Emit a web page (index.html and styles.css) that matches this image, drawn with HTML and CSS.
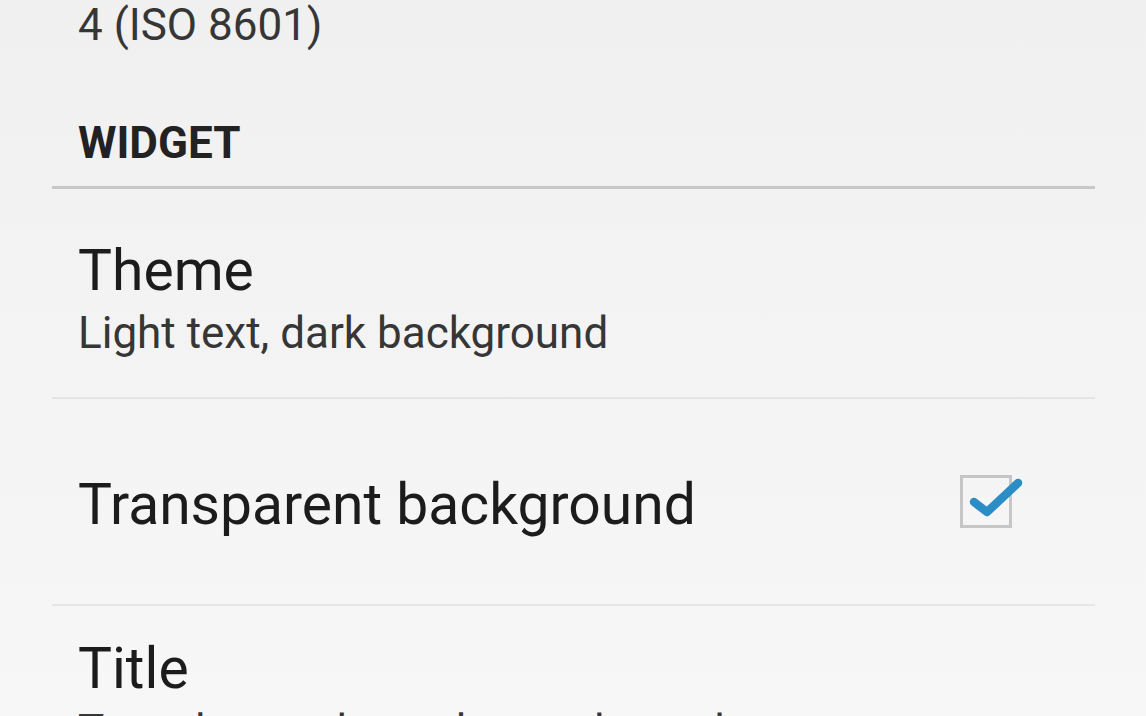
FILE: index.html
```html
<!DOCTYPE html>
<html>
<head>
<meta charset="utf-8">
<link rel="stylesheet" href="styles.css">
</head>
<body>
<div class="screen">
  <div class="summary">4 (ISO 8601)</div>
  <div class="category">
    <div class="category-title">WIDGET</div>
  </div>
  <div class="pref pref-theme">
    <div class="pref-title">Theme</div>
    <div class="summary">Light text, dark background</div>
  </div>
  <div class="pref pref-check">
    <div class="pref-title">Transparent background</div>
    <div class="checkbox">
      <svg class="check" width="70" height="50" viewBox="0 0 70 50">
        <path d="M14 27 L27 37 L58 8" fill="none" stroke="#2b8dc6" stroke-width="8.5" stroke-linecap="round" stroke-linejoin="round"/>
      </svg>
    </div>
  </div>
  <div class="pref pref-title-item">
    <div class="pref-title">Title</div>
    <div class="summary">Text shown above the week number</div>
  </div>
</div>
</body>
</html>
```
FILE: styles.css
```css
html, body {
  margin: 0;
  padding: 0;
  height: 100%;
  overflow: hidden;
}
body {
  background: linear-gradient(#f0f0f0, #f7f7f7);
  font-family: Roboto, "Noto Sans", sans-serif;
}
.screen {
  padding: 0 51px 0 52px;
}
.summary {
  font-size: 44px;
  line-height: 50px;
  color: #363636;
  padding-left: 26px;
}
.category {
  margin-top: 67px;
  border-bottom: 3px solid #c8c8c8;
  padding-bottom: 17px;
}
.category-title {
  font-size: 44px;
  line-height: 52px;
  font-weight: bold;
  color: #222;
  padding-left: 26px;
}
.pref-title {
  font-size: 57px;
  line-height: 64px;
  color: #1c1c1c;
  padding-left: 26px;
}
.pref-theme {
  padding-top: 50px;
  padding-bottom: 39px;
  border-bottom: 2px solid #e4e4e4;
}
.pref-theme .summary {
  margin-top: 5px;
}
.pref-check {
  display: flex;
  align-items: center;
  justify-content: space-between;
  height: 205px;
  border-bottom: 2px solid #e6e6e6;
}
.pref-check .pref-title {
  margin-top: 6px;
}
.checkbox {
  position: relative;
  width: 46px;
  height: 47px;
  border: 3px solid #c6c6c6;
  margin-right: 83px;
}
.check {
  position: absolute;
  left: -3px;
  top: -3px;
}
.pref-title-item {
  padding-top: 31px;
}
.pref-title-item .summary {
  margin-top: 5px;
}
```
